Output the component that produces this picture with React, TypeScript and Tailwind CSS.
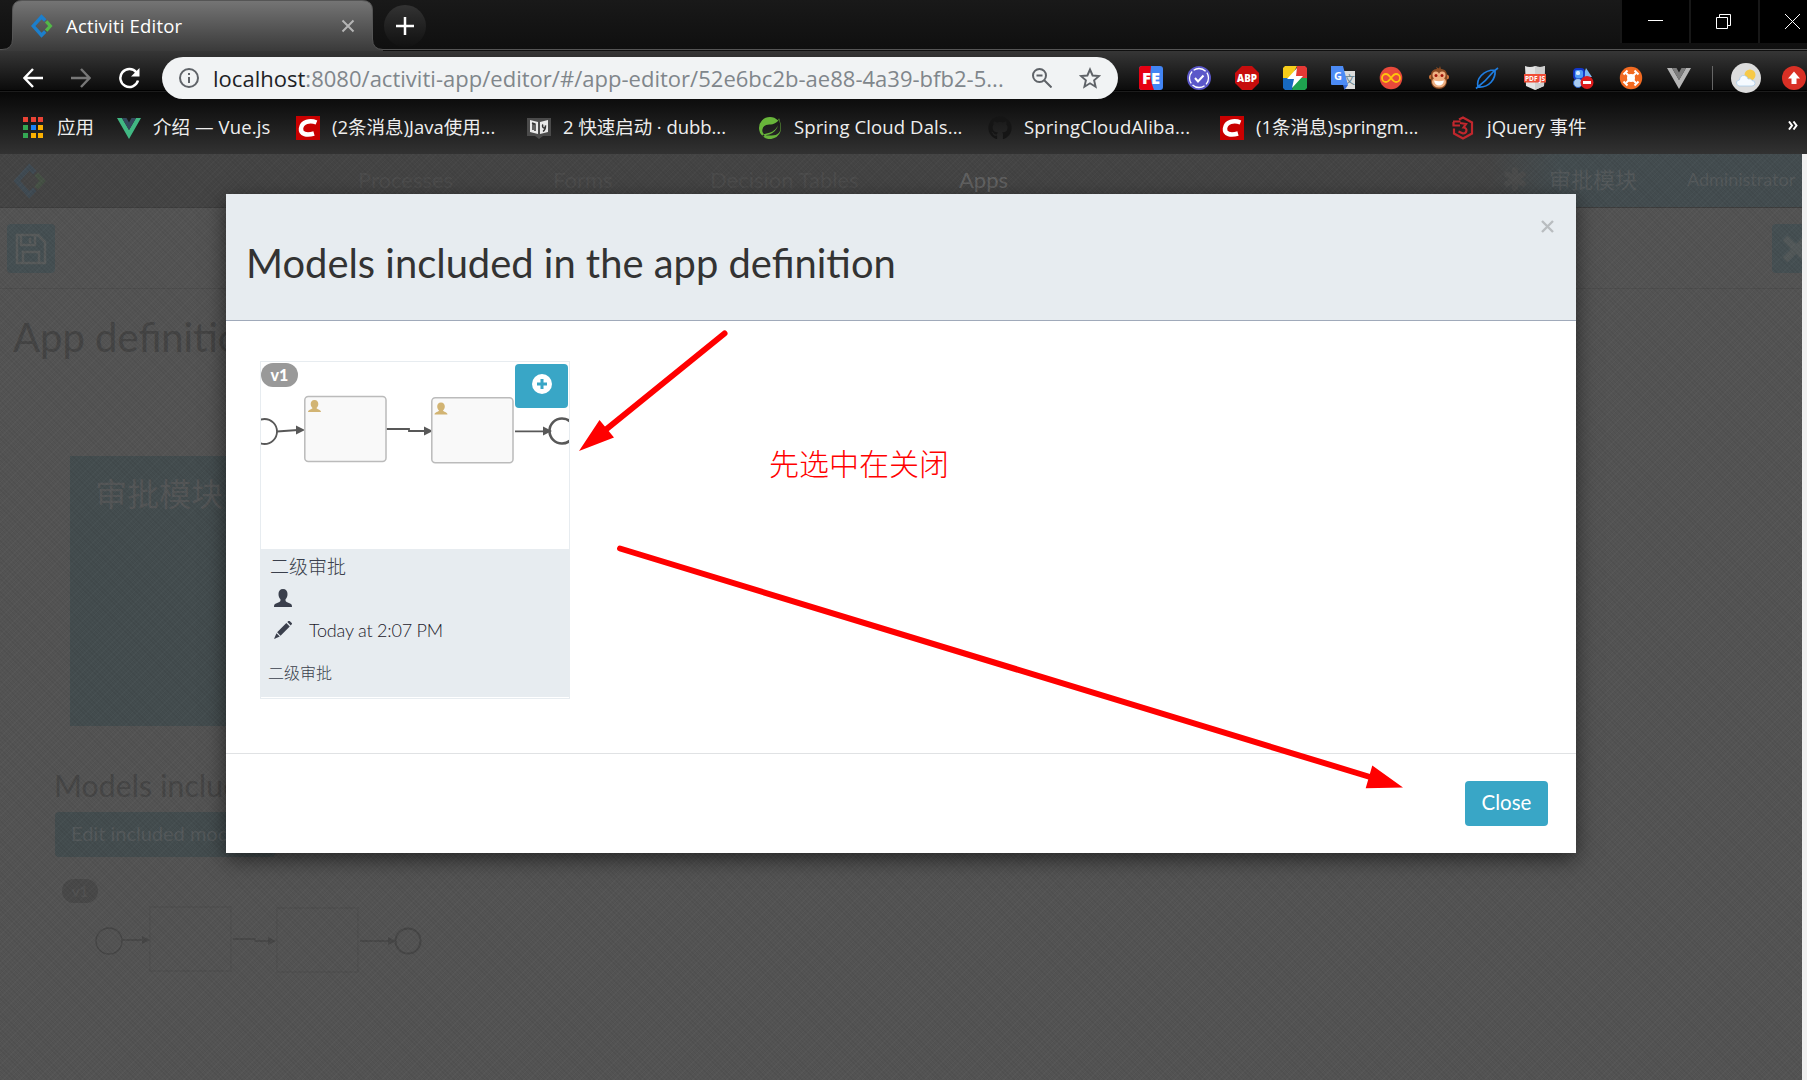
import type { ReactNode } from "react"
import { FaGithub } from "react-icons/fa"
import { SiSpring } from "react-icons/si"
import { Asterisk } from "lucide-react"

const uiFont = "font-['Open_Sans','Noto_Sans_CJK_SC',sans-serif]"
const latoFont = "font-[Lato,'Noto_Sans_CJK_SC',sans-serif]"

function ActivitiLogo({ className }: { className: string }) {
    return (
        <svg viewBox="0 0 24 26" className={className} fill="none" strokeWidth="3.600">
            <path d="M15.500 7L11.500 3L2.500 13L11.500 23L15.500 19" stroke="#1c7fcc" />
            <path d="M16.500 8L21 13L16.500 18" stroke="#52b848" />
        </svg>
    )
}

function VueIcon({ outer, inner }: { outer: string; inner: string }) {
    return (
        <svg viewBox="0 0 24 24" className="h-6 w-6">
            <path d="M0 2h5l7 12 7-12h5L12 23z" fill={outer} />
            <path d="M5 2h4.500l2.500 4.500L14.500 2H19l-7 12z" fill={inner} />
        </svg>
    )
}

function CsdnIcon() {
    return (
        <svg viewBox="0 0 24 24" className="h-6 w-6">
            <rect width="24" height="24" fill="#c90000" />
            <path
                d="M20.500 6.500C14 4 6 5.500 5 12.500C4.300 18.500 11 19.500 18 17.500"
                fill="none"
                stroke="#fff"
                strokeWidth="4.500"
            />
        </svg>
    )
}

function AppsIcon() {
    const colors = [
        "#ea4335", "#ea4335", "#ea4335",
        "#34a853", "#1a82f7", "#fbb000",
        "#34a853", "#fbb000", "#fbb000",
    ]
    return (
        <div className="grid w-5 grid-cols-3 gap-x-[2.500px] gap-y-[3px]">
            {colors.map((c, i) => (
                <div key={i} className="h-[5px] w-[5px]" style={{ background: c }} />
            ))}
        </div>
    )
}

function BookIcon() {
    return (
        <svg viewBox="0 0 24 24" className="h-6 w-6">
            <path d="M0 2h24v18h-8l-4 3-4-3H0z" fill="#4b4b4b" />
            <path d="M3 4l8 2v12l-8-2zM21 4l-8 2v12l8-2z" fill="#e8e8e8" />
            <path
                d="M5 7l3 1v7M6 8v6M16 8.500a1.500 2 0 1 0 2.500 1c0 3-1 5-2.500 6"
                fill="none"
                stroke="#333"
                strokeWidth="1.500"
            />
        </svg>
    )
}

function JqIcon() {
    return (
        <svg viewBox="0 0 24 24" className="h-6 w-6" fill="none" stroke="#c1272d" strokeWidth="2.200">
            <path d="M8 3.500L12 1.500L21 6.500V17.500L12 22.500L3 17.500V12.500" />
            <path d="M2 5.500H9.500M2.500 6V9.500H9M9 7L15 8L12.500 11.500C17 12 16 17.500 12 17.500L7.500 15.500" />
        </svg>
    )
}

function UserIcon({ className }: { className: string }) {
    return (
        <svg viewBox="0 0 20 20" className={className} fill="currentColor">
            <path d="M10 0C6.700 0 5 2.300 5 5.500c0 2.600.8 4.600 2.200 6v1.300c0 .8-.4 1.200-1.200 1.600L1.600 16.500C.5 17 0 18 0 20h20c0-2-.5-3-1.600-3.500L14 14.400c-.8-.4-1.200-.8-1.200-1.600v-1.300c1.400-1.400 2.200-3.400 2.200-6C15 2.300 13.300 0 10 0z" />
        </svg>
    )
}

function PencilIcon() {
    return (
        <svg viewBox="0 0 20 20" className="h-[18px] w-[18px]" fill="currentColor">
            <path d="M14.800 1.200L16 0c.4-.4 1-.4 1.400 0L19.700 2.300c.4.400.4 1 0 1.400L18.600 5zM13.700 2.300L17.500 6.200 7.300 16.300 3.500 12.500zM2.700 13.500L6.400 17.200 0 20z" />
        </svg>
    )
}

const bookmarks: { icon: ReactNode; label: string; width: string; text: string }[] = [
    { icon: <AppsIcon />, label: "应用", width: "w-[94px]", text: "" },
    { icon: <VueIcon outer="#41b883" inner="#35495e" />, label: "介绍 — Vue.js", width: "w-[179px]", text: "tracking-[0.1px]" },
    { icon: <CsdnIcon />, label: "(2条消息)Java使用...", width: "w-[231px]", text: "" },
    { icon: <BookIcon />, label: "2 快速启动 · dubb...", width: "w-[231px]", text: "tracking-[-0.05px]" },
    { icon: <SiSpring className="h-[22px] w-[24px] text-[#68b53a]" />, label: "Spring Cloud Dals...", width: "w-[230px]", text: "tracking-[0.1px]" },
    { icon: <FaGithub className="h-6 w-6 text-[#151515]" />, label: "SpringCloudAliba...", width: "w-[232px]", text: "tracking-[0.2px]" },
    { icon: <CsdnIcon />, label: "(1条消息)springm...", width: "w-[231px]", text: "" },
    { icon: <JqIcon />, label: "jQuery 事件", width: "w-[329px]", text: "" },
]

const extensions: ReactNode[] = [
    <svg viewBox="0 0 24 24" className="h-6 w-6">
        <rect width="24" height="24" rx="3" fill="#4285f4" />
        <path d="M3 0h9q-2 12 3 24H3q-3 0-3-3V3q0-3 3-3z" fill="#e60012" />
        <text x="12" y="18" textAnchor="middle" fontSize="16.500" fontWeight="800" fill="#fff" fontFamily="Open Sans">FE</text>
    </svg>,
    <svg viewBox="0 0 24 24" className="h-6 w-6" fill="none">
        <circle cx="12" cy="12" r="12" fill="#5b57c9" />
        <circle cx="12" cy="12" r="9.500" stroke="#fff" strokeWidth="1.300" strokeDasharray="13 1.920" strokeDashoffset="6" />
        <path d="M8 12l3 3.500 5.500-6" stroke="#fff" strokeWidth="2" />
    </svg>,
    <svg viewBox="0 0 24 24" className="h-6 w-6">
        <path d="M7 0h10l7 7v10l-7 7H7l-7-7V7z" fill="#c70d0d" />
        <text x="12" y="16" textAnchor="middle" fontSize="11" textLength="20" lengthAdjust="spacingAndGlyphs" fontWeight="800" fill="#fff" fontFamily="Open Sans">ABP</text>
    </svg>,
    <svg viewBox="0 0 24 24" className="h-6 w-6">
        <path d="M2 0h12L8 12H0V2z" fill="#f6cd1b" />
        <path d="M14 0h8l2 2v10H12z" fill="#e53935" />
        <path d="M0 12h12l-3 12H2l-2-2z" fill="#1769c0" />
        <path d="M12 12h12v10l-2 2H9z" fill="#1ea34f" />
        <path d="M14 2L4 13h7L9 22 20 10h-7z" fill="#fff" />
    </svg>,
    <svg viewBox="0 0 24 24" className="h-6 w-6">
        <path d="M10 5h14v18H14z" fill="#dcdcdc" />
        <text x="13" y="18" fontSize="11" fill="#607d8b" fontFamily="Noto Sans CJK SC">文</text>
        <path d="M0 0h12l5 19H1q-1 0-1-1z" fill="#4c8bf5" />
        <path d="M12 19h5l-3.500 5z" fill="#3367d6" />
        <text x="3" y="14" fontSize="11" fontWeight="700" fill="#fff" fontFamily="Open Sans">G</text>
    </svg>,
    <svg viewBox="0 0 24 24" className="h-6 w-6" fill="none">
        <circle cx="12" cy="12" r="11.300" fill="#e8493b" />
        <path d="M12 12C9.500 8.500 8.500 8 7 8a4 4 0 0 0 0 8c1.500 0 2.500-.5 5-4s3.500-4 5-4a4 4 0 0 1 0 8c-1.500 0-2.500-.5-5-4z" stroke="#ffc20e" strokeWidth="1.800" />
    </svg>,
    <svg viewBox="0 0 24 24" className="h-6 w-6">
        <circle cx="4.500" cy="11" r="2.500" fill="#c9723a" />
        <circle cx="19.500" cy="11" r="2.500" fill="#c9723a" />
        <path d="M4 9C4 4 8 3 10 3l-1-2 3 1.500L13 0l1 3c3 0 6 2 6 6v6c0 5-4 8-8 8s-8-3-8-8z" fill="#8a4a22" />
        <ellipse cx="8.800" cy="9" rx="3.300" ry="3.500" fill="#f0b183" />
        <ellipse cx="15.200" cy="9" rx="3.300" ry="3.500" fill="#f0b183" />
        <ellipse cx="12" cy="16" rx="7" ry="5.500" fill="#f0b183" />
        <circle cx="9" cy="9.500" r="1.500" fill="#a3160b" />
        <circle cx="15" cy="9.500" r="1.500" fill="#a3160b" />
        <path d="M7 14.500q5 1.500 10 0-1 5-5 5t-5-5z" fill="#fff" />
    </svg>,
    <svg viewBox="0 0 24 24" className="h-6 w-6" fill="none" stroke="#1f7de0" strokeWidth="1.700">
        <path d="M3 21C1 13 8 4 20 4c1 9-6 18-17 17zM1 22.500C7 18 15 10 19 5l4-3" />
    </svg>,
    <svg viewBox="0 0 24 24" className="h-6 w-6">
        <path d="M2 0q5 2 10 0q5 2 10 0l-1 20-9 4-9-4z" fill="#e4e4e4" />
        <path d="M12 0q5 2 10 0l-1 20-9 4z" fill="#cfcfcf" />
        <rect x="1" y="8" width="22" height="8.500" fill="#f04e37" />
        <text x="12" y="15" textAnchor="middle" fontSize="7" textLength="20" lengthAdjust="spacingAndGlyphs" fontWeight="700" fill="#fff" fontFamily="Open Sans">PDF JS</text>
    </svg>,
    <svg viewBox="0 0 24 24" className="h-6 w-6">
        <path d="M15 2l6 9h-9z" fill="#7db8f0" />
        <rect x="3" y="3" width="10" height="10" rx="3" fill="#4f9cf5" stroke="#1237c9" strokeWidth="1.800" />
        <rect x="5" y="5" width="4" height="4" rx="1.500" fill="#d5ecff" />
        <circle cx="7" cy="17" r="4.500" fill="#a9cdf3" stroke="#2c62c9" />
        <circle cx="16" cy="16.500" r="6.500" fill="#dd1c1c" />
        <rect x="12" y="15" width="8" height="3" fill="#fff" />
    </svg>,
    <svg viewBox="0 0 24 24" className="h-6 w-6">
        <circle cx="12" cy="12" r="11.200" fill="#f26a21" />
        <path d="M7 7l10 10M17 7L7 17" stroke="#fff" strokeWidth="2" />
        <path d="M4.500 8.500l4-4M19.500 8.500l-4-4M4.500 15.500l4 4M15.500 19.500l4-4" stroke="#fff" strokeWidth="2" />
        <circle cx="12" cy="12" r="4" fill="#fff" />
    </svg>,
    <VueIcon outer="#b5b5b5" inner="#7d7d7d" />,
]

function TabStrip() {
    return (
        <div className="relative flex h-[51px] shrink-0 justify-between bg-linear-to-b from-[#191919] to-[#0f0f0f]">
            <svg className="absolute inset-0 h-[51px] w-full" fill="none">
                <defs>
                    <linearGradient id="tab" x1="0" y1="0" x2="0" y2="1">
                        <stop offset="0" stopColor="#757575" />
                        <stop offset="1" stopColor="#3a3a3a" />
                    </linearGradient>
                </defs>
                <path
                    d="M0 49.500H2Q12.500 49.500 12.500 39V10Q12.500 .5 22 .5H362Q372.500 .5 372.500 10V39Q372.500 49.500 383 49.500V51H0z"
                    fill="url(#tab)"
                />
                <path
                    d="M0 49.500H2Q12.500 49.500 12.500 39V10Q12.500 .5 22 .5H362Q372.500 .5 372.500 10V39Q372.500 49.500 383 49.500H1807"
                    stroke="#555"
                />
            </svg>
            <div className="relative flex w-[430px] items-center pl-[30px]">
                <ActivitiLogo className="h-6 w-6" />
                <span className="ml-3 w-[275px] text-[18.500px] tracking-[0.2px] text-white">Activiti Editor</span>
                <svg viewBox="0 0 14 14" className="h-[14px] w-[14px] shrink-0" stroke="#b5b5b5" strokeWidth="2">
                    <path d="M1.500 1.500l11 11M12.500 1.500l-11 11" />
                </svg>
                <div className="ml-[29px] flex h-[42px] w-[42px] shrink-0 items-center justify-center rounded-full bg-linear-to-b from-[#333] to-[#111]">
                    <svg viewBox="0 0 18 18" className="h-[18px] w-[18px]" stroke="#fff" strokeWidth="2.500">
                        <path d="M9 0v18M0 9h18" />
                    </svg>
                </div>
            </div>
            <div className="relative flex h-[43px] gap-[2px] bg-[#171717] pl-[2px] text-white">
                <div className="flex w-[67px] items-center justify-center bg-black">
                    <div className="mt-[-2px] h-px w-[15px] bg-white" />
                </div>
                <div className="flex w-[67px] items-center justify-center bg-black pr-[3px]">
                    <svg viewBox="0 0 15 15" className="h-[15px] w-[15px]" fill="none" stroke="#fff">
                        <path d="M.5 3.500h11v11H.5zM3.500 3.500V.5h11v11h-3" />
                    </svg>
                </div>
                <div className="flex w-[47px] items-center bg-black pl-[25px]">
                    <svg viewBox="0 0 15 15" className="h-[15px] w-[15px]" stroke="#fff">
                        <path d="M0 0l15 15M15 0L0 15" />
                    </svg>
                </div>
            </div>
        </div>
    )
}

function Toolbar() {
    return (
        <div className="flex h-[54px] shrink-0 items-center bg-[linear-gradient(#363636,#0b0b0b_39px,#000_39px,#000_40px,#1c1c1c_40px,#1c1c1c_41px,#080808_41px,#101010)] pl-[23px]">
            <svg viewBox="0 0 20 20" className="h-5 w-5" fill="none" stroke="#fff" strokeWidth="2.400">
                <path d="M20 10H2M10 1L1.500 10L10 19" />
            </svg>
            <svg viewBox="0 0 20 20" className="ml-7 h-5 w-5" fill="none" stroke="#777" strokeWidth="2.400">
                <path d="M0 10h18M10 1l8.500 9L10 19" />
            </svg>
            <svg viewBox="0 0 22 22" className="ml-[27px] h-[22px] w-[22px]" fill="none">
                <path d="M18.500 5.500A9 9 0 1 0 20 13.500" stroke="#fff" strokeWidth="2.500" />
                <path d="M21.500 1v8.500H13z" fill="#fff" />
            </svg>
            <div className="ml-[22px] flex h-[42px] w-[956px] shrink-0 items-center rounded-full bg-[#f1f3f4] pl-[17px]">
                <svg viewBox="0 0 20 20" className="h-5 w-5" fill="none" stroke="#5f6368" strokeWidth="2">
                    <circle cx="10" cy="10" r="9" />
                    <path d="M10 9v6M10 5v2" />
                </svg>
                <span className="ml-[14px] w-[816px] text-[22px] tracking-[0.02px] whitespace-nowrap text-[#80868b]">
                    <span className="text-[#202124]">localhost</span>
                    :8080/activiti-app/editor/#/app-editor/52e6bc2b-ae88-4a39-bfb2-5...
                </span>
                <svg viewBox="0 0 20 20" className="ml-[3px] h-5 w-5 shrink-0" fill="none" stroke="#5f6368" strokeWidth="2">
                    <circle cx="7.500" cy="7.500" r="6.500" />
                    <path d="M12 12l7.500 7.500M4.500 7.500h6" />
                </svg>
                <svg viewBox="0 0 22 22" className="ml-[27px] h-[22px] w-[22px] shrink-0" fill="none" stroke="#5f6368" strokeWidth="1.900">
                    <path d="M11 2.500l2.600 6 6.300.6-4.800 4.200 1.500 6.400-5.600-3.400-5.600 3.400 1.500-6.400L2.100 9.100l6.300-.6z" />
                </svg>
            </div>
            <div className="ml-[21px] flex shrink-0 items-center gap-6">
                {extensions.map((icon, i) => (
                    <div key={i}>{icon}</div>
                ))}
            </div>
            <div className="ml-[21px] h-6 w-px shrink-0 bg-[#666]" />
            <svg viewBox="0 0 30 30" className="ml-[18px] h-[30px] w-[30px] shrink-0">
                <circle cx="15" cy="15" r="15" fill="#dcdcdc" />
                <circle cx="19" cy="12" r="5.500" fill="#f7c948" />
                <path d="M8 23q-3-1-2.500-4 1-2 3-2 .5-5 5-4.500 3 .5 3.500 3.500 3-1 4 1.500 3 0 3 3-.5 2.500-3 2.500z" fill="#f5faff" stroke="#a5c8ea" strokeWidth=".7" />
            </svg>
            <svg viewBox="0 0 24 24" className="ml-[21px] h-6 w-6 shrink-0">
                <circle cx="12" cy="12" r="12" fill="#d93025" />
                <path d="M12 5.500l6 7h-3.500V18h-5v-5.500H6z" fill="#fff" />
            </svg>
        </div>
    )
}

function BookmarkBar() {
    return (
        <div className="flex h-[49px] shrink-0 items-center bg-linear-to-b from-[#101010] to-[#323232] pb-[4px] pl-[23px]">
            {bookmarks.map((b, i) => (
                <div key={i} className={`flex shrink-0 items-center ${b.width}`}>
                    <div className={i === 0 ? "w-[34px]" : "w-[36px]"}>{b.icon}</div>
                    <span className={`pb-[2px] text-[18.500px] whitespace-nowrap text-[#eee] ${b.text}`}>{b.label}</span>
                </div>
            ))}
            <svg viewBox="0 0 10 9" className="mb-1 ml-[8px] h-[9px] w-[10px]" fill="none" stroke="#fff" strokeWidth="2">
                <path d="M1 .5l3 4-3 4M5.500 .5l3 4-3 4" />
            </svg>
        </div>
    )
}

function AppPage() {
    return (
        <div className={`flex h-full flex-col bg-[#535353] ${latoFont}`}>
            <div className="flex h-[54px] shrink-0 items-center border-b border-[#3d3d3d] bg-[linear-gradient(to_right,#444_1490px,#434c4f_1560px)] pb-[3px] text-[22px] text-[#4c4c4c]">
                <div className="w-[358px] pt-[3px] pl-[12px]">
                    <ActivitiLogo className="h-[36px] w-[36px] opacity-10" />
                </div>
                <span className="w-[195px]">Processes</span>
                <span className="w-[157px]">Forms</span>
                <span className="w-[249px]">Decision Tables</span>
                <span className="w-[538px] text-[#626262]">Apps</span>
                <Asterisk className="h-9 w-9 text-[#4b4c4c]" strokeWidth={4} />
                <span className="ml-[16px] w-[138px] text-[#53585a]">审批模块</span>
                <span className="text-[18px] whitespace-nowrap text-[#53585a]">Administrator</span>
            </div>
            <div className="flex h-[81px] shrink-0 items-start justify-between border-b border-[#4c4c4c] pt-4 pl-[7px]">
                <div className="flex h-[49px] w-12 items-center justify-center rounded bg-[#454f52]">
                    <svg viewBox="0 0 32 32" className="h-8 w-8" fill="none" stroke="#575a5a" strokeWidth="2.500">
                        <path d="M2 2h21l7 7v21H2zM6 2v10h14V2M8 30V19h16v11M15 5v5" />
                    </svg>
                </div>
                <div className="flex h-[49px] w-[30px] items-center overflow-hidden rounded-l bg-[#454f52] pl-[10px]">
                    <svg viewBox="0 0 28 28" className="h-7 w-7 shrink-0" stroke="#525859" strokeWidth="7">
                        <path d="M3 3l22 22M25 3L3 25" />
                    </svg>
                </div>
            </div>
            <h1 className="mt-[23px] ml-[13px] shrink-0 text-[40px] leading-[50px] text-[#434343]">App definition details</h1>
            <div className="mt-[94px] ml-[70px] h-[270px] w-[300px] shrink-0 bg-[#434c4e] pt-[14px] pl-[25px] text-[32px] text-[#535556]">
                审批模块
            </div>
            <h2 className="mt-[39px] ml-[54px] shrink-0 text-[30px] leading-[40px] tracking-[0.2px] text-[#454545]">Models included in the app definition</h2>
            <div className="mt-[7px] ml-[55px] flex h-[45px] w-[220px] shrink-0 items-center rounded bg-[#434c4e] pb-[3px] pl-[16px] text-[20px] whitespace-nowrap text-[#53585a]">
                Edit included models
            </div>
            <div className="mt-[22px] ml-[62px] flex h-6 w-9 shrink-0 items-center justify-center rounded-full bg-[#484848] text-[15px] font-bold text-[#505050]">
                v1
            </div>
            <svg className="ml-[90px] h-[80px] w-[340px] shrink-0" fill="none" stroke="#454545" strokeWidth="1.300">
                <circle cx="19" cy="38" r="13" />
                <path d="M32 37h22M143 36h22v2h14M270 38h32" />
                <path d="M60 4h81v64H60zM187 5h81v64h-81z" stroke="#4f4f4f" />
                <path d="M52 33l8 4-8 4zM178 34l8 4-8 4zM298 34l8 4-8 4z" fill="#454545" stroke="none" />
                <circle cx="318" cy="38" r="12.500" strokeWidth="2" />
            </svg>
        </div>
    )
}

function ModelCard() {
    return (
        <div className="w-[310px] border border-[#e7ecf0] text-[#3a3f4c]">
            <div className="relative h-[187px]">
                <svg className="block h-[187px] w-[308px]" viewBox="261 362 308 187" fill="none" stroke="#585858">
                    <circle cx="264.500" cy="431.500" r="12.500" strokeWidth="1.800" />
                    <circle cx="562" cy="431" r="12.500" strokeWidth="2.600" />
                    <path d="M277 431.500L298 430M386.500 429H409V431H427M515 431.300H545" strokeWidth="1.800" />
                    <path d="M296 425.500l9 4.500-9 4.500zM424 426.500l9 4.500-9 4.500zM543 426.500l9 4.500-9 4.500z" fill="#585858" stroke="none" />
                    <g fill="#f9f9f9" stroke="#bbb" strokeWidth="1.500">
                        <rect x="304.800" y="396.500" width="81.200" height="65" rx="3.500" />
                        <rect x="431.800" y="397.700" width="81.200" height="65" rx="3.500" />
                    </g>
                    <g fill="#d2b473" stroke="none">
                        <path id="head" d="M314.500 400c-2.600 0-3.800 1.700-3.800 4 0 1.800.8 3.200 1.800 4-.2 1.500-4.300 1.200-4.500 4h13c-.2-2.800-4.300-2.500-4.500-4 1-.8 1.800-2.200 1.800-4 0-2.300-1.200-4-3.800-4z" />
                        <use href="#head" x="126.500" y="2.500" />
                    </g>
                </svg>
                <div className="absolute top-px left-0 flex h-6 w-[37px] items-center justify-center rounded-full bg-[#999] text-[16px] font-black text-white">
                    v1
                </div>
                <div className="absolute top-[2px] right-px flex h-11 w-[53px] items-start justify-center rounded bg-[#39a6c6] pt-[10px]">
                    <svg viewBox="0 0 20 20" className="h-5 w-5">
                        <circle cx="10" cy="10" r="10" fill="#fff" />
                        <path d="M10 5v10M5 10h10" stroke="#39a6c6" strokeWidth="3" />
                    </svg>
                </div>
            </div>
            <div className="mb-px h-[148px] bg-[#e7ecf0] pl-[9px]">
                <div className="h-[40px] pt-[4px] text-[19px] leading-[28px] font-light">二级审批</div>
                <div className="flex h-[20px] items-start pl-[4px]">
                    <UserIcon className="h-[18px] w-[18px]" />
                </div>
                <div className="mt-[7px] flex h-[28px] items-center pl-[4px]">
                    <PencilIcon />
                    <span className="ml-[17px] text-[18px] tracking-[-0.2px] font-light text-[#1c202b]">Today at 2:07 PM</span>
                </div>
                <div className="-ml-[2px] pt-[17px] text-[16px] leading-6 font-light">二级审批</div>
            </div>
        </div>
    )
}

function Modal() {
    return (
        <div className={`flex h-[659px] w-[1350px] flex-col bg-white shadow-[0_6px_20px_rgba(0,0,0,0.55)] ${latoFont}`}>
            <div className="flex h-[127px] items-start justify-between border-b border-[#a0aaba] bg-[#e7ecf0] pl-[20px]">
                <h3 className="pt-[44px] text-[39.900px] leading-[50px] text-[#333]">Models included in the app definition</h3>
                <svg viewBox="0 0 13 13" className="mt-[26px] mr-[22px] h-[13px] w-[13px]" stroke="#b9bdc0" strokeWidth="2.400">
                    <path d="M1 1l11 11M12 1L1 12" />
                </svg>
            </div>
            <div className="h-[432px] pt-10 pl-[34px]">
                <ModelCard />
            </div>
            <div className="flex grow items-start justify-end border-t border-[#e0e2e4] pt-[27px] pr-7">
                <button className="h-[45px] w-[83px] rounded bg-[#39a6c6] pb-[2px] text-[20.500px] text-white">Close</button>
            </div>
        </div>
    )
}

function Annotations() {
    return (
        <>
            <svg className="absolute inset-0 h-[1080px] w-[1807px]" fill="red" stroke="red">
                <path d="M724.500 333.500L606 429.500M620 548.500L1370 777" strokeWidth="6" strokeLinecap="round" />
                <path d="M579 451L599.500 420L614 437.500zM1403 787.500L1372.300 765.500L1365.700 788.300z" stroke="none" />
            </svg>
            <div className="absolute top-[440px] left-[769px] text-[30px] leading-[44px] font-light whitespace-nowrap text-[#f00] font-['Noto_Sans_CJK_SC',serif]">
                先选中在关闭
            </div>
        </>
    )
}

export default function App() {
    return (
        <div className={`relative flex h-[1080px] w-[1807px] flex-col overflow-hidden bg-[#525252] ${uiFont}`}>
            <TabStrip />
            <Toolbar />
            <BookmarkBar />
            <div className="flex min-h-0 grow">
                <div className="relative h-full w-[1802px] overflow-hidden">
                    <AppPage />
                    {/* woven backdrop over the page */}
                    <div className="absolute inset-0 bg-[repeating-linear-gradient(45deg,rgba(0,0,0,0.05)_0_1px,transparent_1px_3px),repeating-linear-gradient(-45deg,rgba(255,255,255,0.025)_0_1px,transparent_1px_4px)]" />
                    <div className="absolute top-10 left-[226px]">
                        <Modal />
                    </div>
                </div>
                <div className="w-[5px] bg-[#f0f0f0]" />
            </div>
            <Annotations />
        </div>
    )
}
